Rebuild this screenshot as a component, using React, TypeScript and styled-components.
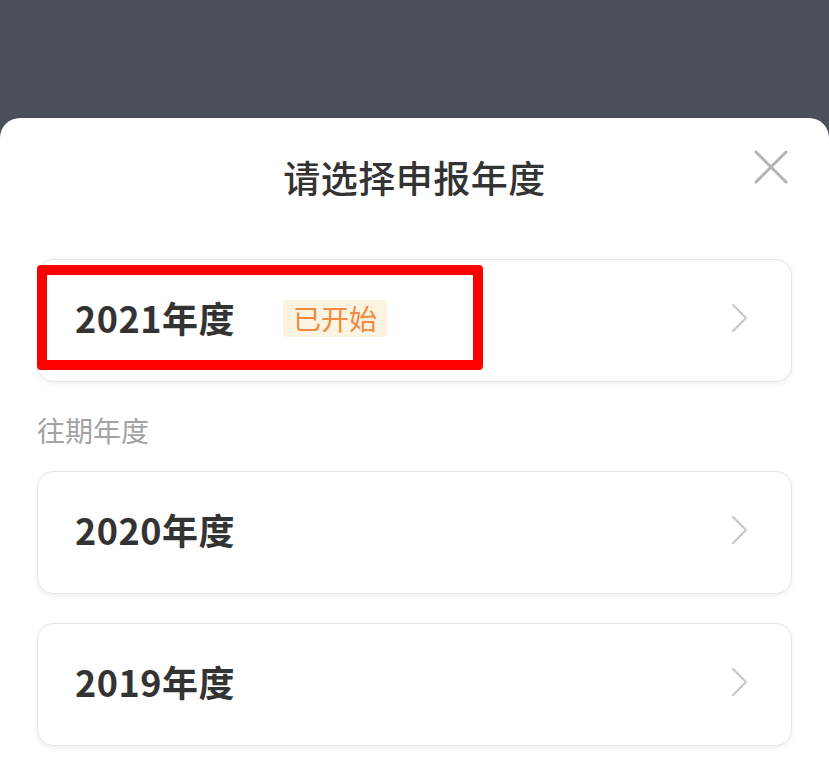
import React from "react";
import styled, { createGlobalStyle } from "styled-components";

const GlobalStyle = createGlobalStyle`
    html, body {
        margin: 0;
        padding: 0;
        background: #4b4f5a;
    }
    * {
        box-sizing: border-box;
    }
`;

const Page = styled.div`
    width: 829px;
    height: 773px;
    overflow: hidden;
    display: flex;
    flex-direction: column;
    padding-top: 118px;
    background: #4b4f5a;
    font-family: "Noto Sans CJK SC", "Noto Sans", sans-serif;
`;

const Sheet = styled.div`
    flex: 1;
    background: #ffffff;
    border-radius: 20px 20px 0 0;
    padding: 0 37px;
`;

const Header = styled.div`
    display: grid;
    grid-template-columns: 1fr auto 1fr;
    align-items: start;
    height: 141px;
    padding-top: 32px;
`;

const Title = styled.h1`
    grid-column: 2;
    margin: 2px 0 0;
    font-size: 37px;
    line-height: 50px;
    font-weight: 500;
    color: #333333;
    letter-spacing: 0.5px;
`;

const CloseButton = styled.button`
    grid-column: 3;
    justify-self: end;
    width: 34px;
    height: 34px;
    margin-right: 4px;
    padding: 0;
    border: none;
    background: none;
    display: flex;
    align-items: center;
    justify-content: center;
`;

const SectionLabel = styled.div`
    margin: 28px 0 21px;
    font-size: 28px;
    line-height: 40px;
    color: #a3a3a3;
`;

const List = styled.div`
    display: flex;
    flex-direction: column;
    gap: 29px;
`;

const Card = styled.div`
    position: relative;
    height: 123px;
    display: flex;
    align-items: center;
    padding: 0 42px 5px 37px;
    border: 1px solid #e6e6e6;
    border-radius: 16px;
    background: #ffffff;
    box-shadow: 0 2px 6px rgba(0, 0, 0, 0.06);
`;

const Year = styled.span`
    margin-bottom: 2px;
    font-size: 36px;
    font-weight: 700;
    color: #333333;
    line-height: 1;
    letter-spacing: 0.5px;
`;

const Badge = styled.span`
    margin-left: 48px;
    height: 37px;
    padding: 0 10px;
    display: inline-flex;
    align-items: center;
    font-size: 28px;
    color: #ee8a42;
    background: #fdf3e1;
    border-radius: 4px;
`;

const Spacer = styled.div`
    flex: 1;
`;

const Highlight = styled.div`
    position: absolute;
    left: -1px;
    top: 5px;
    width: 446px;
    height: 105px;
    border: 10px solid #ff0000;
    border-radius: 4px;
    pointer-events: none;
`;

const CloseIcon = () => (
    <svg width="34" height="34" viewBox="0 0 34 34">
        <path d="M2 2 L32 32 M32 2 L2 32" stroke="#b4b4b4" strokeWidth="3" strokeLinecap="round" />
    </svg>
);

const Chevron = () => (
    <svg width="18" height="30" viewBox="0 0 18 30">
        <polyline points="2,2 15,15 2,28" fill="none" stroke="#c6c6c6" strokeWidth="2" strokeLinecap="round" strokeLinejoin="round" />
    </svg>
);

interface YearCardProps {
    year: string;
    status?: string;
    highlight?: boolean;
}

const YearCard = ({ year, status, highlight }: YearCardProps) => (
    <Card>
        <Year>{year}年度</Year>
        {status && <Badge>{status}</Badge>}
        <Spacer />
        <Chevron />
        {highlight && <Highlight />}
    </Card>
);

export default function App() {
    return (
        <Page>
            <GlobalStyle />
            <Sheet>
                <Header>
                    <Title>请选择申报年度</Title>
                    <CloseButton aria-label="关闭">
                        <CloseIcon />
                    </CloseButton>
                </Header>
                <YearCard year="2021" status="已开始" highlight />
                <SectionLabel>往期年度</SectionLabel>
                <List>
                    <YearCard year="2020" />
                    <YearCard year="2019" />
                </List>
            </Sheet>
        </Page>
    );
}
